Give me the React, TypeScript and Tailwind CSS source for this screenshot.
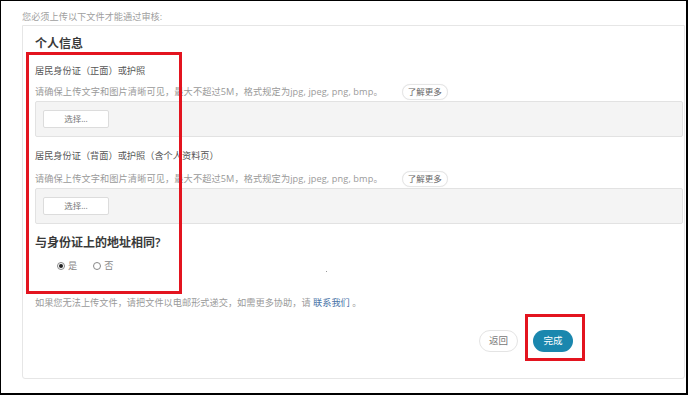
const font = { fontFamily: '"Open Sans", "Noto Sans CJK SC", sans-serif' };

function UploadBlock({ label, hintGap }: { label: string; hintGap: string }) {
  return (
    <div>
      <div className="text-[9.2px] leading-[14px] text-[#555]">{label}</div>
      <div className={`${hintGap} flex h-[16px] items-center`}>
        <span className="text-[9.2px] leading-[14px] tracking-[0.1px] text-[#9a9a9a]">
          请确保上传文字和图片清晰可见，最大不超过5M，格式规定为jpg, jpeg, png, bmp。
        </span>
        <button className="ml-[19px] flex h-[16px] w-[46px] items-center justify-center rounded-full border border-[#e6e6e6] bg-white text-[8.5px] text-[#666] shadow-[0_0_1px_rgba(0,0,0,0.08)]">
          了解更多
        </button>
      </div>
      <div className="mt-[1px] mr-[1px] h-[36px] rounded-[2px] border border-[#e2e2e2] bg-[#f4f4f4] pl-[7px] pt-[8px]">
        <button className="flex h-[18px] w-[66px] items-center justify-center rounded-[2px] border border-[#dcdcdc] bg-white text-[8.5px] text-[#777]">
          选择...
        </button>
      </div>
    </div>
  );
}

function Radio({ checked, label }: { checked?: boolean; label: string }) {
  return (
    <label className="flex items-center gap-[3px]">
      <span className="flex h-[8px] w-[8px] items-center justify-center rounded-full border border-[#888] bg-white">
        {checked && <span className="h-[4px] w-[4px] rounded-full bg-[#222]" />}
      </span>
      <span className="text-[9.2px] leading-[12px] text-[#888]">{label}</span>
    </label>
  );
}

export default function App() {
  return (
    <div className="relative h-[396px] w-[690px] bg-white" style={font}>
      <div className="h-[395px] w-[688px] overflow-hidden border-t border-l border-r-2 border-b-2 border-black">
        {/* Page intro */}
        <div className="pl-[21px] pt-[9px] text-[9.2px] leading-[14px] text-[#a0a0a0]">
          您必须上传以下文件才能通过审核:
        </div>

        {/* Document card */}
        <div className="ml-[21px] mt-[1px] w-[663px] rounded-b-[3px] border border-[#e6e6e6] bg-white pl-[12px] pt-[10px] pb-[26px]">
          <h2 className="text-[12px] font-semibold leading-[16px] text-[#3a3a3a]">个人信息</h2>

          <div className="mt-[12px]">
            <UploadBlock label="居民身份证（正面）或护照" hintGap="mt-[6px]" />
          </div>
          <div className="mt-[12px]">
            <UploadBlock label="居民身份证（背面）或护照（含个人资料页）" hintGap="mt-[8px]" />
          </div>

          <h2 className="mt-[11px] text-[12px] font-semibold leading-[16px] text-[#3a3a3a]">
            与身份证上的地址相同?
          </h2>
          <div className="mt-[9px] flex h-[12px] items-center gap-[16px] pl-[22px]">
            <Radio checked label="是" />
            <Radio label="否" />
            <span className="ml-[197px] mt-[10px] h-[1px] w-[1px] bg-[#999]" />
          </div>

          <p className="mt-[24px] text-[9.2px] leading-[14px] text-[#9a9a9a]">
            如果您无法上传文件，请把文件以电邮形式递交，如需更多协助，请 <a className="text-[#4a74a8]">联系我们</a> 。
          </p>

          <div className="mt-[20px] flex justify-end gap-[15px] pr-[111px]">
            <button className="flex h-[22px] w-[39px] items-center justify-center rounded-full border border-[#e4e4e4] bg-white text-[9.5px] text-[#777]">
              返回
            </button>
            <button className="flex h-[22px] w-[40px] items-center justify-center rounded-full bg-[#1a87ae] text-[9.5px] text-white">
              完成
            </button>
          </div>
        </div>
      </div>

      {/* Red annotation boxes */}
      <div className="pointer-events-none absolute left-[26px] top-[52px] h-[242px] w-[156px] border-[3px] border-[#e3141f]" />
      <div className="pointer-events-none absolute left-[525px] top-[314px] h-[47px] w-[60px] border-[3px] border-[#e3141f]" />
    </div>
  );
}
